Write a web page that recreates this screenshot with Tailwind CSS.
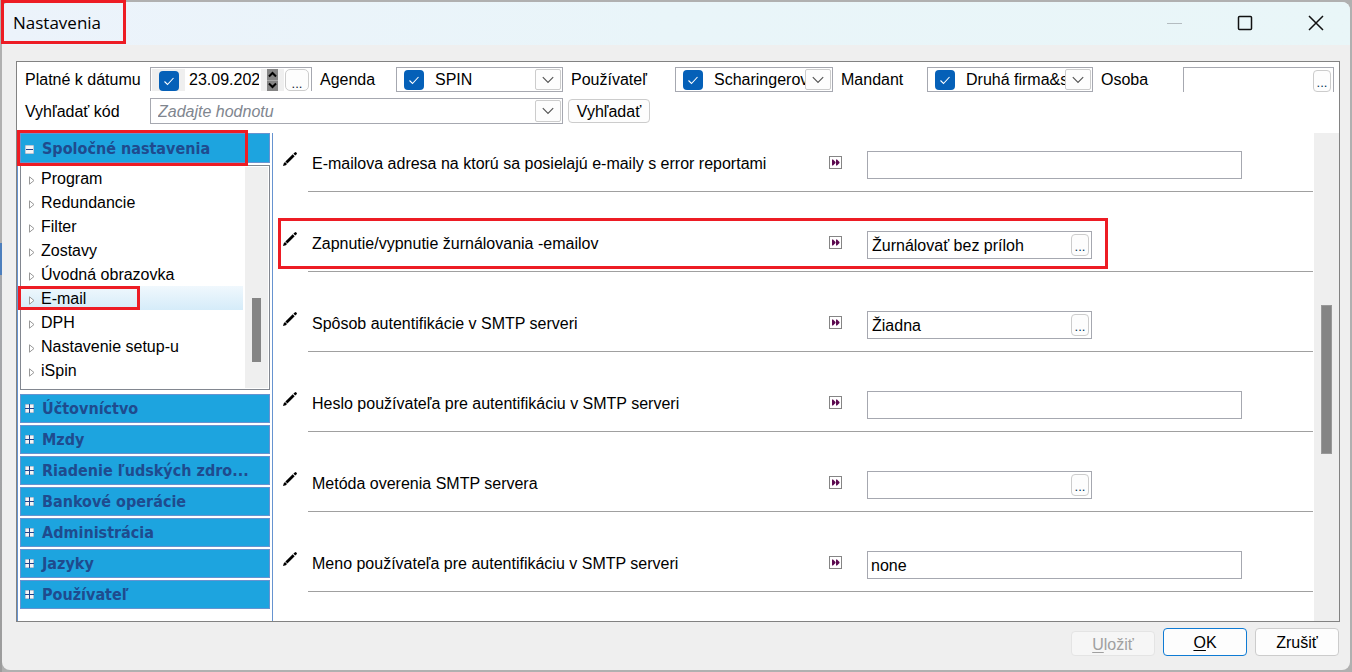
<!DOCTYPE html>
<html lang="sk">
<head>
<meta charset="utf-8">
<meta name="viewport" content="width=device-width, initial-scale=1">
<title>Nastavenia</title>
<script src="https://cdn.jsdelivr.net/npm/@tailwindcss/browser@4"></script>
</head>
<body class="bg-[#b0b0b0] font-['Liberation_Sans',Arial,sans-serif] text-base text-black">

<svg class="hidden" aria-hidden="true">
  <symbol id="check" viewBox="0 0 20 20"><path d="M5.500 10.500l3 3 6-6.500" fill="none" stroke="#fff" stroke-width="1.100"/></symbol>
  <symbol id="chev" viewBox="0 0 12 8"><path d="M.8 1.200L6 6.400l5.200-5.200" fill="none" stroke="#555" stroke-width="1.200"/></symbol>
  <symbol id="pencil" viewBox="0 0 14 14"><path d="M0 14l.8-2.800L2 10 4 12 2.800 13.200z" fill="#000"/><path d="M2.400 9.600L9.700 2.300 11.700 4.300 4.400 11.600z" fill="#000"/><path d="M10.400 1.700L11.700.4q.8-.6 1.500 0l.4.400q.6.700 0 1.500L12.300 3.600z" fill="#000"/></symbol>
  <symbol id="ff" viewBox="0 0 13 13"><path d="M3 3.500h1L6.500 6v1L4 9.500H3zM7 3.500h1L10.500 6v1L8 9.500H7z" fill="#5c0a50"/></symbol>
  <symbol id="tri" viewBox="0 0 6 9"><path d="M.5.800v7.400L5 4.500z" fill="#fff" stroke="#999" stroke-width="1"/></symbol>
  <symbol id="plus" viewBox="0 0 9 9"><path d="M0 0h9v9H0z" fill="#6f94b8"/><path d="M.5.500h8v8h-8z" fill="#f4f4f4"/><path d="M4 0h1v9H4zM0 4h9v1H0z" fill="#22448c"/></symbol>
  <symbol id="minus" viewBox="0 0 9 9"><path d="M0 0h9v9H0z" fill="#7f9dba"/><path d="M.5.500h8v8h-8z" fill="#f4f4f4"/><path d="M1 4h7v1H1z" fill="#22448c"/></symbol>
</svg>

<div class="flex min-h-screen bg-[linear-gradient(#b0b0b0_243px,#4d7fbd_243px,#4d7fbd_275px,#a6a8ac_275px,#9c9c9c)] bg-[length:2px_100%] bg-no-repeat p-0.5">
<main class="flex min-w-0 flex-1 flex-col overflow-clip rounded-lg bg-[#efefef]">

  <header class="flex h-[43px] shrink-0 items-center bg-linear-to-r from-[#ecf3fb] via-[#e9f5f9] to-[#e9f6f8] font-['Open_Sans','Noto_Sans',sans-serif]">
    <h1 class="pb-0.5 pl-[11px] text-[17px] leading-6">Nastavenia</h1>
    <div class="ml-auto flex items-center gap-[55px] pr-[26px] pb-0.5">
      <button aria-label="Minimalizovať" disabled><svg class="h-4 w-4" viewBox="0 0 16 16"><path d="M1 8.500h15" stroke="#b4bcc0"/></svg></button>
      <button aria-label="Maximalizovať"><svg class="h-4 w-4" viewBox="0 0 16 16"><rect x="1.500" y="1.500" width="13" height="13" rx="1" fill="none" stroke="#111" stroke-width="1.500"/></svg></button>
      <button aria-label="Zavrieť"><svg class="h-4 w-4" viewBox="0 0 16 16"><path d="M1 1l14 14M15 1L1 15" stroke="#111" stroke-width="1.500"/></svg></button>
    </div>
  </header>

  <section class="mt-4 mr-[10px] ml-[14px] flex flex-1 flex-col border border-[#828282] bg-white">

    <form class="flex flex-col gap-[6px] pt-[5px] pr-[5px] pl-2">
      <div class="flex h-[25px] items-center">
        <label for="date" class="w-[125px] shrink-0">Platné k dátumu</label>
        <div class="flex h-6 w-[162px] shrink-0 items-stretch self-start border border-b-0 border-[#a6a8b0] pt-px pr-0.5 pl-px">
          <span class="grid w-[33px] shrink-0 items-end justify-center bg-[#efefef]"><input type="checkbox" checked aria-label="Použiť dátum" class="col-start-1 row-start-1 size-5 appearance-none rounded bg-[#0560b8]"><svg class="pointer-events-none col-start-1 row-start-1 size-5"><use href="#check"/></svg></span>
          <input id="date" value="23.09.2022" class="ml-1 w-[70px] min-w-0">
          <span class="ml-0.5 flex flex-1 justify-center bg-[#efefef]"><span class="flex w-[11px] flex-col bg-[#858585]">
            <button type="button" aria-label="Viac" class="flex-1 border-b border-[#aaa]"><svg class="mx-auto h-[7px] w-[9px]" viewBox="0 0 9 7"><path d="M1 5.500l3.500-3.500L8 5.500" fill="none" stroke="#000" stroke-width="2"/></svg></button>
            <button type="button" aria-label="Menej" class="flex-1"><svg class="mx-auto h-[7px] w-[9px]" viewBox="0 0 9 7"><path d="M1 1.500l3.500 3.500L8 1.500" fill="none" stroke="#000" stroke-width="2"/></svg></button>
          </span></span>
          <button type="button" aria-label="Vybrať dátum" class="ml-px w-6 rounded-[5px] border border-[#ccc] bg-[#fdfdfd] pt-1.5 text-[13px] leading-4 text-[#123]">...</button>
        </div>
        <label for="agenda" class="ml-2 w-[76px] shrink-0">Agenda</label>
        <div class="flex h-full w-[167px] shrink-0 items-center border border-[#a6a8b0] pr-px pl-[7px]">
          <span class="grid shrink-0"><input type="checkbox" checked aria-label="Použiť agendu" class="col-start-1 row-start-1 size-5 appearance-none rounded bg-[#0560b8]"><svg class="pointer-events-none col-start-1 row-start-1 size-5"><use href="#check"/></svg></span>
          <select id="agenda" class="ml-[11px] w-0 min-w-0 flex-1 appearance-none overflow-hidden text-clip"><option>SPIN</option></select>
          <button type="button" aria-label="Otvoriť zoznam" class="grid h-[21px] w-[26px] shrink-0 place-items-center rounded-xs border border-[#ccc] bg-[#fdfdfd]"><svg class="h-2 w-3"><use href="#chev"/></svg></button>
        </div>
        <label for="user" class="ml-2 w-[104px] shrink-0">Používateľ</label>
        <div class="flex h-full w-[158px] shrink-0 items-center border border-[#a6a8b0] pr-px pl-[7px]">
          <span class="grid shrink-0"><input type="checkbox" checked aria-label="Použiť používateľa" class="col-start-1 row-start-1 size-5 appearance-none rounded bg-[#0560b8]"><svg class="pointer-events-none col-start-1 row-start-1 size-5"><use href="#check"/></svg></span>
          <select id="user" class="ml-[11px] w-0 min-w-0 flex-1 appearance-none overflow-hidden text-clip"><option>Scharingerová</option></select>
          <button type="button" aria-label="Otvoriť zoznam" class="grid h-[21px] w-[26px] shrink-0 place-items-center rounded-xs border border-[#ccc] bg-[#fdfdfd]"><svg class="h-2 w-3"><use href="#chev"/></svg></button>
        </div>
        <label for="mandant" class="ml-2 w-[86px] shrink-0">Mandant</label>
        <div class="flex h-full w-[166px] shrink-0 items-center border border-[#a6a8b0] pr-px pl-[7px]">
          <span class="grid shrink-0"><input type="checkbox" checked aria-label="Použiť mandanta" class="col-start-1 row-start-1 size-5 appearance-none rounded bg-[#0560b8]"><svg class="pointer-events-none col-start-1 row-start-1 size-5"><use href="#check"/></svg></span>
          <select id="mandant" class="ml-[11px] w-0 min-w-0 flex-1 appearance-none overflow-hidden text-clip"><option>Druhá firma&amp;s</option></select>
          <button type="button" aria-label="Otvoriť zoznam" class="grid h-[21px] w-[26px] shrink-0 place-items-center rounded-xs border border-[#ccc] bg-[#fdfdfd]"><svg class="h-2 w-3"><use href="#chev"/></svg></button>
        </div>
        <label for="person" class="ml-2 w-[82px] shrink-0">Osoba</label>
        <div class="flex h-full min-w-0 flex-1 border border-b-0 border-[#a6a8b0] pt-0.5 pr-0.5">
          <input id="person" class="w-0 min-w-0 flex-1">
          <button type="button" aria-label="Vybrať osobu" class="w-[18px] shrink-0 rounded border border-[#ccc] bg-[#fdfdfd] pt-1 text-[13px] leading-4 text-[#035]">...</button>
        </div>
      </div>
      <div class="flex h-[26px] items-center">
        <label for="code" class="w-[125px] shrink-0 pt-0.5">Vyhľadať kód</label>
        <div class="flex h-full w-[413px] items-center border border-[#a6a8b0] pr-px">
          <input id="code" placeholder="Zadajte hodnotu" class="min-w-0 flex-1 pt-0.5 pl-[7px] italic placeholder:text-[#80868f]">
          <button type="button" aria-label="Otvoriť zoznam" class="grid h-[22px] w-[26px] place-items-center rounded-xs border border-[#ccc] bg-[#fdfdfd]"><svg class="h-2 w-3"><use href="#chev"/></svg></button>
        </div>
        <button type="button" class="ml-[5px] h-6 w-[82px] rounded border border-[#ccc] bg-[#fdfdfd] pt-0.5 leading-5">Vyhľadať</button>
      </div>
    </form>

    <div class="mt-[9px] flex flex-1">

      <nav class="flex w-64 shrink-0 flex-col border-x border-[#6693d0] px-0.5">
        <div class="relative">
          <button class="flex h-[30px] w-full items-center gap-2 border border-[#6693d0] bg-[#1da4df] pt-0.5 pl-1 text-left font-['DejaVu_Sans_Condensed','DejaVu_Sans',sans-serif] font-bold text-[#1f4b8e]"><svg class="size-[9px] shrink-0"><use href="#minus"/></svg>Spoločné nastavenia</button>
          <div class="pointer-events-none absolute -top-[3px] -left-[3px] h-9 w-[231px] border-3 border-[#ed1c24]"></div>
        </div>
        <div class="mt-0.5 flex h-[225px] border border-[#828790]">
          <ul id="pages" class="flex-1 leading-[22px]"></ul>
          <div class="my-px mr-px ml-0.5 w-[23px] bg-[#efefef] pt-[131px] pl-[7px]"><div class="h-16 w-[9px] bg-[#858585]"></div></div>
        </div>
        <div id="groups" class="mt-1 flex flex-col gap-0.5 font-['DejaVu_Sans_Condensed','DejaVu_Sans',sans-serif] font-bold text-[#1f4b8e]"></div>
      </nav>

      <div id="settings" class="flex min-w-0 flex-1 flex-col gap-[21px] pr-px pl-[10px] leading-6"></div>

      <div class="w-[25px] shrink-0 bg-[#efefef] pt-[172px] pl-[7px]"><div class="h-[149px] w-[11px] border border-[#999] bg-[#858585]"></div></div>
    </div>
  </section>

  <footer class="flex shrink-0 items-end justify-end gap-2 pt-1.5 pr-[11px] pb-[14px]">
    <button disabled class="h-[25px] w-[84px] rounded border border-[#e4e4e4] bg-[#f6f6f6] pt-px text-[#a0a0a0]"><span class="underline underline-offset-2">U</span>ložiť</button>
    <button class="h-7 w-[84px] rounded border border-[#0f7bd4] bg-[#fdfdfd] pt-px"><span class="underline underline-offset-2">O</span>K</button>
    <button class="h-7 w-[84px] rounded border border-[#ccc] bg-[#fdfdfd] pt-px">Zrušiť</button>
  </footer>
</main>
</div>
<div class="pointer-events-none absolute top-0 left-px h-11 w-[125px] border-3 border-[#ed1c24]"></div>

<script>
const pages = ['Program', 'Redundancie', 'Filter', 'Zostavy', 'Úvodná obrazovka', 'E-mail', 'DPH', 'Nastavenie setup-u', 'iSpin'];
const groups = ['Účtovníctvo', 'Mzdy', 'Riadenie ľudských zdro...', 'Bankové operácie', 'Administrácia', 'Jazyky', 'Používateľ'];
const settings = [
  { label: 'E-mailova adresa na ktorú sa posielajú e-maily s error reportami', value: '' },
  { label: 'Zapnutie/vypnutie žurnálovania -emailov', value: 'Žurnálovať bez príloh', picker: true, marked: true },
  { label: 'Spôsob autentifikácie v SMTP serveri', value: 'Žiadna', picker: true },
  { label: 'Heslo používateľa pre autentifikáciu v SMTP serveri', value: '' },
  { label: 'Metóda overenia SMTP servera', value: '', picker: true },
  { label: 'Meno používateľa pre autentifikáciu v SMTP serveri', value: 'none' },
];

document.getElementById('pages').innerHTML = pages.map(name => {
  const link = current => `<a href="#" ${current} class="flex items-center gap-1.5 pt-0.5 pl-2"><svg class="mt-0.5 h-[9px] w-[6px]"><use href="#tri"/></svg>${name}</a>`;
  return name === 'E-mail'
    ? `<li class="relative bg-linear-to-b from-[#f0f8fd] to-[#d5ecf9]">${link('aria-current="page"')}<div class="pointer-events-none absolute top-0 -left-[3px] h-6 w-[122px] border-3 border-[#ed1c24]"></div></li>`
    : `<li>${link('')}</li>`;
}).join('');

document.getElementById('groups').innerHTML = groups.map(name =>
  `<button class="flex h-[29px] items-center gap-2 border border-[#6693d0] bg-[#1da4df] pl-1"><svg class="size-[9px] shrink-0"><use href="#plus"/></svg><span class="pt-px">${name}</span></button>`
).join('');

document.getElementById('settings').innerHTML = settings.map((s, i) => `
  <div class="relative flex items-start gap-[11px] pt-[18px]">
    <button aria-label="Upraviť" class="mt-px"><svg class="size-[14px]"><use href="#pencil"/></svg></button>
    <div class="flex flex-1 items-start border-b border-[#a0a0a0] pb-3 pl-1">
      <label for="f${i}" class="w-[517px] pt-px">${s.label}</label>
      <button aria-label="Ďalej" class="mt-[5px] mr-[25px] size-[13px] outline -outline-offset-1 outline-[#858585]"><svg class="size-[13px]"><use href="#ff"/></svg></button>
      ${s.picker
        ? `<div class="flex h-7 w-[225px] border border-[#a6a8b0] py-0.5 pr-0.5"><input id="f${i}" value="${s.value}" class="min-w-0 flex-1 pt-px pl-1"><button aria-label="Vybrať" class="w-[18px] rounded border border-[#ccc] bg-[#fdfdfd] pt-1 text-[13px] leading-4 text-[#035]">...</button></div>`
        : `<input id="f${i}" value="${s.value}" class="h-7 w-[375px] border border-[#a6a8b0] px-[3px] pt-px">`}
    </div>
    ${s.marked ? '<div class="pointer-events-none absolute top-[5px] left-[-5px] h-[51px] w-[830px] border-3 border-[#ed1c24]"></div>' : ''}
  </div>`).join('');
</script>
</body>
</html>
